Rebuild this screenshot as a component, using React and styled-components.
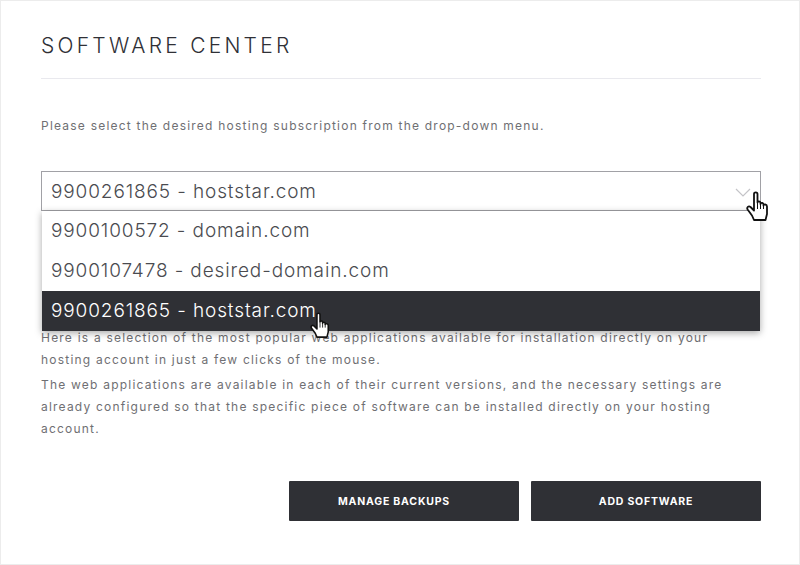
import React from 'react';
import styled, { createGlobalStyle } from "styled-components";

const Global = createGlobalStyle`
    html, body {
        margin: 0;
        padding: 0;
        background: #fff;
    }
    * {
        box-sizing: border-box;
    }
`

const Page = styled.div`
    width: 800px;
    height: 565px;
    padding: 0 38px 0 40px;
    border: 1px solid #ececec;
    background: #fff;
    font-family: "Inter", "Liberation Sans", sans-serif;
    color: #6f6f73;
    overflow: hidden;
`

const Title = styled.h1`
    margin: 0;
    height: 78px;
    padding-top: 32px;
    border-bottom: 1px solid #e9e9ee;
    font-size: 21px;
    line-height: 26px;
    font-weight: 300;
    letter-spacing: 3.25px;
    color: #2f3036;
`

const Intro = styled.p`
    margin: 36px 0 0;
    font-size: 12px;
    line-height: 22px;
    letter-spacing: 1.22px;
`

const SelectWrap = styled.div`
    position: relative;
    margin-top: 34px;
`

const SelectBox = styled.div`
    height: 40px;
    padding: 0 9px;
    display: flex;
    align-items: center;
    justify-content: space-between;
    border: 1px solid #a1a1a6;
    font-size: 19px;
    font-weight: 300;
    letter-spacing: 0.88px;
    color: #4a4b50;
`

const Chevron = styled.svg`
    width: 16px;
    height: 9px;
    margin: 3px 0 0 0;
`

const Menu = styled.ul`
    position: absolute;
    top: 40px;
    left: 1px;
    right: 1px;
    margin: 0;
    padding: 0;
    list-style: none;
    background: #fff;
    box-shadow: 0 2px 7px rgba(0, 0, 0, 0.35);
`

const Option = styled.li`
    height: 40px;
    padding: 0 9px 2px;
    display: flex;
    align-items: center;
    font-size: 19px;
    font-weight: 300;
    letter-spacing: 0.88px;
    color: ${props => props.$active ? "#fff" : "#4a4b50"};
    background: ${props => props.$active ? "#2f3035" : "#fff"};
`

const Cursor = styled.svg`
    position: absolute;
    left: ${props => props.$left}px;
    top: ${props => props.$top}px;
    width: ${props => props.$small ? 20 : 23}px;
    height: ${props => props.$small ? 26 : 30}px;
    z-index: 2;
`

const Body = styled.div`
    margin-top: 116px;
`

const BodyText = styled.p`
    margin: 0 0 3px;
    font-size: 12px;
    line-height: 22px;
    letter-spacing: 1.21px;
`

const Actions = styled.div`
    margin-top: 41px;
    display: flex;
    justify-content: flex-end;
    gap: 12px;
`

const Button = styled.button`
    width: 230px;
    height: 40px;
    padding: 1px ${props => props.$shift ? 20 : 0}px 0 0;
    border: 0;
    border-radius: 1px;
    background: #2f3035;
    color: #fff;
    font-family: inherit;
    font-size: 10.5px;
    font-weight: 700;
    letter-spacing: 0.8px;
`

const Hand = ({ left, top, small }) => (
    <Cursor $left={left} $top={top} $small={small} viewBox="0 0 23 30">
        <path
            d="M8 3C8 .8 11.5 .8 11.5 3V11.5C11.5 10 14.5 10 14.5 12V13C14.5 11.5 17.5 11.5 17.5 13.5V14.5C17.5 13 21 13 21 15.5V23L19.5 29H8L6 24.5L1.6 18.5C.4 16.5 2.5 14.5 4.5 16L8 19.5Z"
            fill="#fff"
            stroke="#111"
            strokeWidth="1.8"
            strokeLinejoin="round"
        />
        <path d="M11.5 12V18M14.5 13V18M17.5 14.5V18" stroke="#111" strokeWidth="1" fill="none" />
    </Cursor>
)

const App = () => {
  return (
    <Page>
        <Global />
        <Title>SOFTWARE CENTER</Title>
        <Intro>Please select the desired hosting subscription from the drop-down menu.</Intro>
        <SelectWrap>
            <SelectBox>
                9900261865 - hoststar.com
                <Chevron viewBox="0 0 16 9">
                    <path d="M1 1L8 8L15 1" fill="none" stroke="#c4c4c8" strokeWidth="1.2" />
                </Chevron>
            </SelectBox>
            <Menu>
                <Option>9900100572 - domain.com</Option>
                <Option>9900107478 - desired-domain.com</Option>
                <Option $active>9900261865 - hoststar.com</Option>
            </Menu>
            <Hand left={705} top={20} />
            <Hand left={269} top={141} small />
        </SelectWrap>
        <Body>
            <BodyText>
                Here is a selection of the most popular web applications available for installation directly on your<br />
                hosting account in just a few clicks of the mouse.
            </BodyText>
            <BodyText>
                The web applications are available in each of their current versions, and the necessary settings are<br />
                already configured so that the specific piece of software can be installed directly on your hosting<br />
                account.
            </BodyText>
        </Body>
        <Actions>
            <Button $shift>MANAGE BACKUPS</Button>
            <Button>ADD SOFTWARE</Button>
        </Actions>
    </Page>
  )
}

export default App
